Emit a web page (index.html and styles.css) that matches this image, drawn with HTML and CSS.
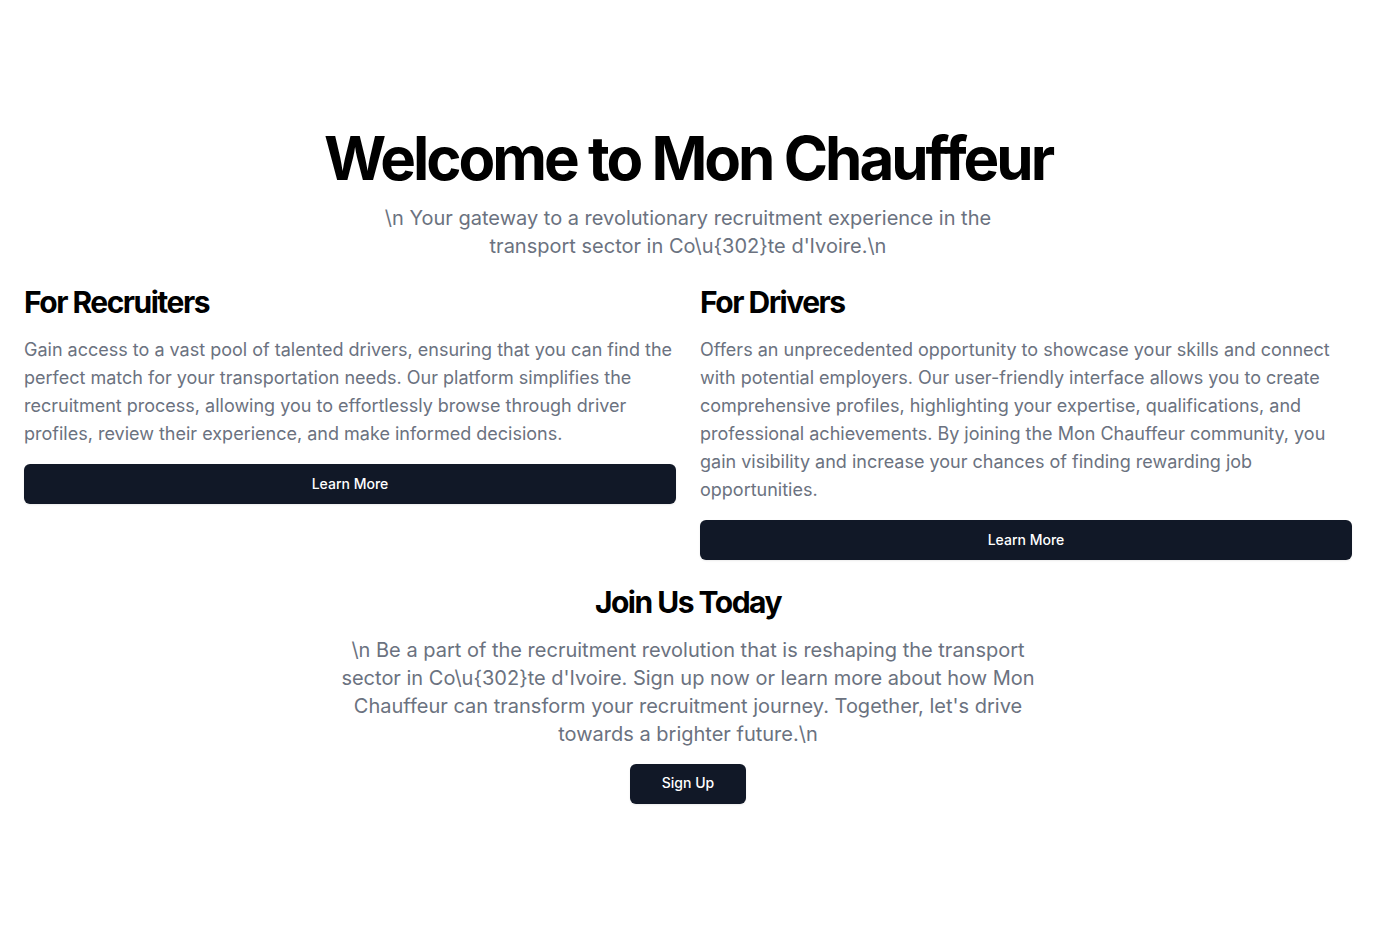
FILE: index.html
```html
<!DOCTYPE html>
<html lang="en">
<head>
<meta charset="utf-8">
<title>Mon Chauffeur</title>
<link rel="stylesheet" href="styles.css">
</head>
<body>
<main class="page">
  <section class="hero">
    <h1 class="hero-title">Welcome to Mon Chauffeur</h1>
    <p class="lead lead-narrow">\n Your gateway to a revolutionary recruitment experience in the transport sector in Co\u{302}te d'Ivoire.\n</p>
  </section>
  <section class="columns">
    <div class="col">
      <h2 class="section-title">For Recruiters</h2>
      <p class="body">Gain access to a vast pool of talented drivers, ensuring that you can find the perfect match for your transportation needs. Our platform simplifies the recruitment process, allowing you to effortlessly browse through driver profiles, review their experience, and make informed decisions.</p>
      <button class="btn btn-full">Learn More</button>
    </div>
    <div class="col">
      <h2 class="section-title">For Drivers</h2>
      <p class="body">Offers an unprecedented opportunity to showcase your skills and connect with potential employers. Our user-friendly interface allows you to create comprehensive profiles, highlighting your expertise, qualifications, and professional achievements. By joining the Mon Chauffeur community, you gain visibility and increase your chances of finding rewarding job opportunities.</p>
      <button class="btn btn-full">Learn More</button>
    </div>
  </section>
  <section class="join">
    <h2 class="section-title">Join Us Today</h2>
    <p class="lead">\n Be a part of the recruitment revolution that is reshaping the transport sector in Co\u{302}te d'Ivoire. Sign up now or learn more about how Mon Chauffeur can transform your recruitment journey. Together, let's drive towards a brighter future.\n</p>
    <button class="btn btn-pad">Sign Up</button>
  </section>
</main>
</body>
</html>
```
FILE: styles.css
```css
* { box-sizing: border-box; }
html, body { margin: 0; padding: 0; }
body {
  font-family: Inter, "Noto Sans", "Liberation Sans", sans-serif;
  background: #ffffff;
  color: #000000;
}
.page {
  min-height: 100vh;
  display: flex;
  flex-direction: column;
  justify-content: center;
  align-items: stretch;
  padding: 0 24px;
  gap: 24px;
}
.hero, .join {
  display: flex;
  flex-direction: column;
  align-items: center;
  text-align: center;
  gap: 16px;
}
.hero-title {
  margin: 0;
  font-size: 60px;
  line-height: 60px;
  font-weight: 700;
  letter-spacing: -0.05em;
}
.lead {
  margin: 0;
  max-width: 700px;
  font-size: 20px;
  line-height: 28px;
  color: #6b7280;
}
.lead-narrow { max-width: 620px; }
.columns {
  display: grid;
  grid-template-columns: 1fr 1fr;
  gap: 24px;
  align-items: start;
}
.col {
  display: flex;
  flex-direction: column;
  gap: 16px;
}
.section-title {
  margin: 0;
  font-size: 30px;
  line-height: 36px;
  font-weight: 700;
  letter-spacing: -0.05em;
}
.body {
  margin: 0;
  font-size: 18px;
  line-height: 28px;
  color: #6b7280;
}
.btn {
  height: 40px;
  border: none;
  border-radius: 6px;
  background: #111827;
  color: #ffffff;
  font-family: inherit;
  font-size: 14px;
  line-height: 20px;
  font-weight: 500;
  padding-bottom: 2px;
  box-shadow: 0 1px 2px rgba(0,0,0,0.08);
  cursor: pointer;
}
.btn-full { width: 100%; }
.btn-pad { padding: 0 32px 2px; }
```
